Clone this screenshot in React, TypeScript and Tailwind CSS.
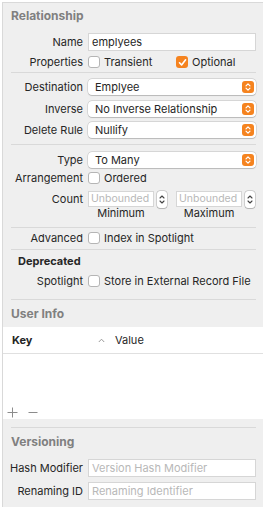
import React from "react";

const font = { fontFamily: "Inter, 'Liberation Sans', sans-serif" };

const Separator = ({ className }: { className?: string }) => (
    <div className={"ml-[8px] mr-[7px] h-px shrink-0 bg-[#d9d9d9] " + (className ?? "")} />
);

const Header = ({ title, className }: { title: string; className?: string }) => (
    <div className={"flex h-[16px] shrink-0 items-center pl-[8px] text-[12px] font-bold text-[#808080] " + (className ?? "")}>
        {title}
    </div>
);

const Row = ({ label, children, className }: { label: string; children?: React.ReactNode; className?: string }) => (
    <div className={"flex shrink-0 items-center " + (className ?? "")}>
        <div className="w-[80px] shrink-0 text-right text-[11px] text-[#262626]">{label}</div>
        <div className="ml-[5px] mr-[7px] flex flex-1 items-center">{children}</div>
    </div>
);

const Check = ({ checked, label }: { checked?: boolean; label: string }) => (
    <div className="flex items-center">
        {checked ? (
            <div className="flex h-[12px] w-[12px] items-center justify-center rounded-[3px] bg-[#f5831f]">
                <svg width="9" height="9" viewBox="0 0 9 9">
                    <path d="M1.5 4.8 L3.6 7 L7.6 1.8" stroke="white" strokeWidth="1.6" fill="none" strokeLinecap="round" strokeLinejoin="round" />
                </svg>
            </div>
        ) : (
            <div className="h-[12px] w-[12px] rounded-[3px] border border-[#b5b5b5] bg-white" />
        )}
        <span className="ml-[4px] text-[11px] text-[#262626]">{label}</span>
    </div>
);

const Popup = ({ value }: { value: string }) => (
    <div className="flex h-[16px] flex-1 items-center justify-between rounded-[4px] bg-white pl-[7px] pr-[2px] shadow-[0_0_0_0.5px_rgba(0,0,0,0.18),0_0.5px_1px_rgba(0,0,0,0.15)]">
        <span className="text-[11px] text-[#262626]">{value}</span>
        <div className="flex h-[12px] w-[12px] items-center justify-center rounded-[3px] bg-[#f5831f]">
            <svg width="8" height="10" viewBox="0 0 8 10">
                <path d="M2 3.8 L4 1.8 L6 3.8 M2 6.2 L4 8.2 L6 6.2" stroke="white" strokeWidth="1.2" fill="none" strokeLinecap="round" strokeLinejoin="round" />
            </svg>
        </div>
    </div>
);

const TextField = ({ value, placeholder }: { value?: string; placeholder?: string }) => (
    <div className="flex h-[18px] flex-1 items-center border border-[#d6d6d6] bg-white px-[3px] text-[11px]">
        {value ? <span className="text-[#262626]">{value}</span> : <span className="text-[#b8b8b8]">{placeholder}</span>}
    </div>
);

const Stepper = () => (
    <div className="flex h-[17px] w-[10px] items-center justify-center rounded-[3px] bg-white shadow-[0_0_0_0.5px_rgba(0,0,0,0.25),0_0.5px_1px_rgba(0,0,0,0.15)]">
        <svg width="8" height="13" viewBox="0 0 8 13">
            <path d="M2 5 L4 3 L6 5 M2 8 L4 10 L6 8" stroke="#444" strokeWidth="1.1" fill="none" strokeLinecap="round" strokeLinejoin="round" />
        </svg>
    </div>
);

const CountField = ({ caption }: { caption: string }) => (
    <div className="flex flex-col">
        <div className="flex h-[16px] items-center">
            <div className="flex h-[16px] w-[66px] items-center overflow-hidden whitespace-nowrap border border-[#d6d6d6] bg-white pl-[2px] text-[10.5px] text-[#b8b8b8]">Unbounded</div>
            <div className="ml-[3px]"><Stepper /></div>
        </div>
        <div className="flex h-[13px] w-[66px] items-center justify-center text-[11px] text-[#262626]">{caption}</div>
    </div>
);

export default function App() {
    return (
        <div className="flex h-[507px] w-[263px] bg-white" style={font}>
            <div className="w-[2px] shrink-0" />
            <div className="mt-[2px] flex flex-1 flex-col border-l border-t border-[#d9d9d9] bg-[#efefef]">
                <Header title="Relationship" className="mt-[5px]" />
                <Row label="Name" className="mt-[9px] h-[18px]"><TextField value="emplyees" /></Row>
                <Row label="Properties" className="mt-[5px] h-[12px]">
                    <div className="flex items-center">
                        <div className="w-[88px]"><Check label="Transient" /></div>
                        <Check checked label="Optional" />
                    </div>
                </Row>
                <Separator className="mt-[4px]" />
                <Row label="Destination" className="mt-[6px] h-[16px]"><Popup value="Emplyee" /></Row>
                <Row label="Inverse" className="mt-[6px] h-[16px]"><Popup value="No Inverse Relationship" /></Row>
                <Row label="Delete Rule" className="mt-[5px] h-[16px]"><Popup value="Nullify" /></Row>
                <Separator className="mt-[6px]" />
                <Row label="Type" className="mt-[7px] h-[16px]"><Popup value="To Many" /></Row>
                <Row label="Arrangement" className="mt-[4px] h-[12px]"><Check label="Ordered" /></Row>
                <Row label="Count" className="mt-[7px] !items-start">
                    <div className="flex items-start">
                        <CountField caption="Minimum" />
                        <div className="ml-[9px]"><CountField caption="Maximum" /></div>
                    </div>
                </Row>
                <Separator className="mt-[7px]" />
                <Row label="Advanced" className="mt-[4px] h-[12px]"><Check label="Index in Spotlight" /></Row>
                <Separator className="mt-[5px]" />
                <div className="mt-[5px] flex h-[13px] shrink-0 items-center pl-[15px] text-[11px] font-bold text-[#262626]">Deprecated</div>
                <Row label="Spotlight" className="mt-[7px] h-[12px]"><Check label="Store in External Record File" /></Row>
                <Separator className="mt-[12px]" />
                <Header title="User Info" className="mt-[6px]" />
                <div className="mt-[5px] flex h-[92px] shrink-0 flex-col bg-white">
                    <div className="flex h-[27px] items-center border-b border-[#e0e0e0] text-[11px] font-bold text-[#262626]">
                        <span className="ml-[9px] w-[86px]">Key</span>
                        <svg width="7" height="5" viewBox="0 0 7 5" className="mr-[10px]">
                            <path d="M0.8 4 L3.5 1.2 L6.2 4" stroke="#9a9a9a" strokeWidth="1" fill="none" />
                        </svg>
                        <span className="font-normal">Value</span>
                    </div>
                    <div className="flex-1" />
                    <div className="flex h-[14px] items-center pl-[4px]">
                        <svg width="11" height="11" viewBox="0 0 11 11"><path d="M5.5 0.5 V10.5 M0.5 5.5 H10.5" stroke="#8c8c8c" strokeWidth="1" /></svg>
                        <svg width="10" height="11" viewBox="0 0 10 11" className="ml-[10px]"><path d="M0.5 5.5 H9.5" stroke="#8c8c8c" strokeWidth="1" /></svg>
                    </div>
                </div>
                <Separator className="mt-[8px]" />
                <Header title="Versioning" className="mt-[6px]" />
                <Row label="Hash Modifier" className="mt-[9px] h-[18px]"><TextField placeholder="Version Hash Modifier" /></Row>
                <Row label="Renaming ID" className="mt-[5px] h-[18px]"><TextField placeholder="Renaming Identifier" /></Row>
            </div>
        </div>
    );
}
